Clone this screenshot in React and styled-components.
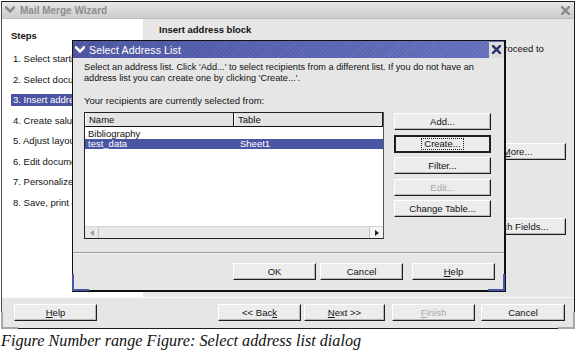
import styled, { createGlobalStyle, css } from "styled-components";

const GlobalStyle = createGlobalStyle`
  html, body {
    margin: 0;
    padding: 0;
    background: #ffffff;
  }
  body {
    font-family: "Liberation Sans", Arial, sans-serif;
  }
`;

const Screen = styled.div`
  position: relative;
  width: 577px;
  height: 353px;
  overflow: hidden;
  background: #ffffff;
`;

const dots = css`
  background-color: #e6e6e6;
  background-image: radial-gradient(#dcdcdc 0.6px, transparent 0.7px);
  background-size: 4px 4px;
`;

const Window = styled.div`
  margin: 1px 0 0 1px;
  width: 574px;
  height: 328px;
  box-sizing: border-box;
  border: 1px solid #1c1c1c;
  border-left-color: #4a4a4a;
  display: flex;
  flex-direction: column;
  position: relative;
  ${dots};
`;

const TitleBar = styled.div`
  height: 16px;
  display: flex;
  align-items: center;
  gap: 5px;
  padding: 0 4px 0 3px;
  background: linear-gradient(#e6e6e6, #cdcdcd);
  border-bottom: 1px solid #bdbdbd;
`;

const TitleText = styled.span`
  flex: 1;
  font-size: 10px;
  font-weight: 700;
  color: ${(p) => (p.$active ? "#ffffff" : "#8c8c8c")};
  ${(p) =>
    p.$active &&
    css`
      font-size: 10.6px;
      font-weight: 400;
      letter-spacing: 0.1px;
    `}
`;

const Main = styled.div`
  flex: 1;
  display: flex;
`;

const StepsPanel = styled.div`
  width: 141px;
  background: #ffffff;
  padding: 11px 0 0 9px;
  box-sizing: border-box;
  display: flex;
  flex-direction: column;
`;

const StepsTitle = styled.div`
  font-size: 9.5px;
  font-weight: 700;
  color: #111;
  margin-bottom: 12px;
`;

const StepItem = styled.div`
  font-size: 9.5px;
  color: #111;
  height: 12px;
  line-height: 12px;
  margin-bottom: 8.5px;
  padding-left: 2px;
  white-space: nowrap;
  align-self: flex-start;
  ${(p) =>
    p.$current &&
    css`
      background: #4a54a0;
      color: #ffffff;
    `}
`;

const RightPanel = styled.div`
  flex: 1;
  padding: 5px 8px 0 16px;
  display: flex;
  flex-direction: column;
`;

const PanelTitle = styled.div`
  font-size: 9.5px;
  font-weight: 700;
  color: #111;
  margin-bottom: 8px;
`;

const PanelText = styled.div`
  font-size: 9.5px;
  color: #111;
  line-height: 12px;
  white-space: nowrap;
`;

const SideButtons = styled.div`
  display: flex;
  flex-direction: column;
  align-items: flex-end;
  gap: 58px;
  margin-top: 76px;
`;

const Button = styled.div`
  width: ${(p) => p.$w || 83}px;
  height: 17px;
  box-sizing: border-box;
  display: flex;
  align-items: center;
  justify-content: center;
  font-size: 9.5px;
  color: ${(p) => (p.$disabled ? "#a8a8a8" : "#111")};
  background: #ececec;
  border-top: 1px solid #ffffff;
  border-left: 1px solid #ffffff;
  border-right: 1px solid #1e1e1e;
  border-bottom: 1px solid #1e1e1e;
  box-shadow: inset -1px -1px 0 #b8b8b8;
  ${(p) =>
    p.$focus &&
    css`
      border: 2px solid #1e1e1e;
      height: 18px;
      box-shadow: none;
    `}
  u {
    text-decoration: underline;
  }
`;

const FocusRing = styled.span`
  border: 1px dotted #222;
  padding: 0 2px;
  line-height: 10px;
`;

const BottomBar = styled.div`
  height: 31px;
  box-sizing: border-box;
  border-top: 1px solid #fafafa;
  display: flex;
  align-items: center;
  padding: 0 0 1px 12px;
`;

const BottomGroup = styled.div`
  display: flex;
  gap: ${(p) => p.$gap || 3}px;
  margin-left: ${(p) => p.$ml || 0}px;
`;

const CornerMark = styled.div`
  position: absolute;
  bottom: -1px;
  ${(p) => (p.$right ? "right: -1px;" : "left: -1px;")}
  width: 17px;
  height: 17px;
  ${(p) =>
    p.$right
      ? css`
          border-right: 2px solid ${p.$color};
          border-bottom: 2px solid ${p.$color};
        `
      : css`
          border-left: 2px solid ${p.$color};
          border-bottom: 2px solid ${p.$color};
        `}
  box-sizing: border-box;
`;

const Dialog = styled.div`
  position: absolute;
  left: 72px;
  top: 40px;
  width: 434px;
  height: 252px;
  box-sizing: border-box;
  border: 1px solid #111;
  border-right-width: 2px;
  border-bottom-width: 2px;
  display: flex;
  flex-direction: column;
  ${dots};
`;

const DialogTitleBar = styled.div`
  height: 17px;
  display: flex;
  align-items: center;
  gap: 4px;
  padding: 0 0 0 2px;
  background: repeating-linear-gradient(
      135deg,
      rgba(255, 255, 255, 0.07) 0 1px,
      transparent 1px 3px
    ),
    linear-gradient(90deg, #4a53a0, #6470bb);
`;

const CloseBox = styled.div`
  width: 15px;
  height: 16px;
  background: #dcdcdc;
  display: flex;
  align-items: center;
  justify-content: center;
`;

const DialogBody = styled.div`
  flex: 1;
  padding: 4px 0 0 11px;
  display: flex;
  flex-direction: column;
`;

const Intro = styled.div`
  font-size: 9.2px;
  line-height: 11px;
  color: #111;
`;

const Recipients = styled.div`
  font-size: 9.5px;
  color: #111;
  margin-top: 11px;
`;

const ListRow = styled.div`
  display: flex;
  gap: 10px;
  margin-top: 6px;
`;

const ListBox = styled.div`
  width: 300px;
  height: 127px;
  box-sizing: border-box;
  border: 1px solid #222;
  border-right-color: #555;
  display: flex;
  flex-direction: column;
  background: #ffffff;
`;

const HeaderRow = styled.div`
  display: flex;
  height: 13px;
  background: #e4e4e4;
  border-bottom: 1px solid #111;
`;

const HeaderCell = styled.div`
  width: ${(p) => p.$w}px;
  flex: ${(p) => (p.$grow ? 1 : "none")};
  font-size: 9.5px;
  color: #111;
  padding-left: 3px;
  line-height: 13px;
  border-right: 1px solid #111;
  border-left: 1px solid #ffffff;
`;

const Rows = styled.div`
  flex: 1;
  padding-top: 2px;
`;

const DataRow = styled.div`
  display: flex;
  height: 10px;
  line-height: 10px;
  font-size: 9.5px;
  color: ${(p) => (p.$selected ? "#ffffff" : "#111")};
  background: ${(p) => (p.$selected ? "#4a56a4" : "transparent")};
`;

const DataCell = styled.div`
  width: ${(p) => p.$w}px;
  padding-left: 3px;
`;

const HScroll = styled.div`
  height: 11px;
  display: flex;
  align-items: stretch;
  background: #e8e8e8;
  border-top: 1px solid #d4d4d4;
`;

const ScrollArrow = styled.div`
  width: 13px;
  display: flex;
  align-items: center;
  justify-content: center;
  border-right: ${(p) => (p.$left ? "1px solid #c4c4c4" : "none")};
  border-left: ${(p) => (p.$left ? "none" : "1px solid #c4c4c4")};
  background: ${(p) => (p.$left ? "#e8e8e8" : "#f4f4f4")};
`;

const ScrollTrack = styled.div`
  flex: 1;
`;

const ListButtons = styled.div`
  display: flex;
  flex-direction: column;
  gap: 4.5px;
  margin-top: 1px;
`;

const Separator = styled.div`
  height: 1px;
  background: #9a9a9a;
  border-bottom: 1px solid #f6f6f6;
  margin: 13px 0 0 -11px;
`;

const DialogButtons = styled.div`
  display: flex;
  gap: 4px;
  margin: 9px 0 0 149px;
`;

const Caption = styled.div`
  font-family: "Liberation Serif", "Times New Roman", serif;
  font-style: italic;
  font-size: 16.2px;
  color: #111;
  margin: 3px 0 0 1px;
`;

function Chevron({ color }) {
  return (
    <svg width="10" height="8" viewBox="0 0 10 8">
      <polyline
        points="1,1.5 5,5.5 9,1.5"
        fill="none"
        stroke={color}
        strokeWidth="2.6"
        strokeLinecap="square"
      />
    </svg>
  );
}

function CloseX({ color, size = 9 }) {
  return (
    <svg width={size} height={size} viewBox="0 0 10 10">
      <path
        d="M1 1 L9 9 M9 1 L1 9"
        stroke={color}
        strokeWidth="2.6"
        strokeLinecap="square"
      />
    </svg>
  );
}

function Arrow({ dir }) {
  return (
    <svg width="4" height="6" viewBox="0 0 4 6">
      <polygon
        points={dir === "left" ? "4,0 0,3 4,6" : "0,0 4,3 0,6"}
        fill={dir === "left" ? "#9a9a9a" : "#222"}
      />
    </svg>
  );
}

const steps = [
  "1.  Select starting document",
  "2.  Select document type",
  "3.  Insert address block",
  "4.  Create salutation",
  "5.  Adjust layout",
  "6.  Edit document",
  "7.  Personalize document",
  "8.  Save, print or send",
];

export default function App() {
  return (
    <Screen>
      <GlobalStyle />
      <Window>
        <TitleBar>
          <Chevron color="#8c8c8c" />
          <TitleText>Mail Merge Wizard</TitleText>
          <CloseX color="#8c8c8c" />
        </TitleBar>
        <Main>
          <StepsPanel>
            <StepsTitle>Steps</StepsTitle>
            {steps.map((s, i) => (
              <StepItem key={s} $current={i === 2}>
                {s}
              </StepItem>
            ))}
          </StepsPanel>
          <RightPanel>
            <PanelTitle>Insert address block</PanelTitle>
            <PanelText>
              Select an address list for the address block. Choose a new list
              and click 'Next' to proceed to
              <br />
              the next step.
            </PanelText>
            <SideButtons>
              <Button $w={97}>
                <span>
                  <u>M</u>ore...
                </span>
              </Button>
              <Button $w={97}>Match Fields...</Button>
            </SideButtons>
          </RightPanel>
        </Main>
        <BottomBar>
          <Button>
            <span>
              <u>H</u>elp
            </span>
          </Button>
          <BottomGroup $ml={121}>
            <Button $w={83}>
              <span>
                &lt;&lt; Bac<u>k</u>
              </span>
            </Button>
            <Button $w={81}>
              <span>
                <u>N</u>ext &gt;&gt;
              </span>
            </Button>
          </BottomGroup>
          <BottomGroup $ml={7} $gap={6}>
            <Button $w={83} $disabled>
              <span>
                <u>F</u>inish
              </span>
            </Button>
            <Button $w={84}>Cancel</Button>
          </BottomGroup>
        </BottomBar>
        <CornerMark $color="#a8a8a8" />
        <CornerMark $right $color="#a8a8a8" />
      </Window>

      <Caption>Figure Number range Figure: Select address list dialog</Caption>

      <Dialog>
        <DialogTitleBar>
          <Chevron color="#ffffff" />
          <TitleText $active>Select Address List</TitleText>
          <CloseBox>
            <CloseX color="#2a3270" />
          </CloseBox>
        </DialogTitleBar>
        <DialogBody>
          <Intro>
            Select an address list. Click 'Add...' to select recipients from a
            different list. If you do not have an
            <br />
            address list you can create one by clicking 'Create...'.
          </Intro>
          <Recipients>Your recipients are currently selected from:</Recipients>
          <ListRow>
            <ListBox>
              <HeaderRow>
                <HeaderCell $w={144}>Name</HeaderCell>
                <HeaderCell $grow>Table</HeaderCell>
              </HeaderRow>
              <Rows>
                <DataRow>
                  <DataCell $w={149}>Bibliography</DataCell>
                  <DataCell />
                </DataRow>
                <DataRow $selected>
                  <DataCell $w={149}>test_data</DataCell>
                  <DataCell>Sheet1</DataCell>
                </DataRow>
              </Rows>
              <HScroll>
                <ScrollArrow $left>
                  <Arrow dir="left" />
                </ScrollArrow>
                <ScrollTrack />
                <ScrollArrow>
                  <Arrow dir="right" />
                </ScrollArrow>
              </HScroll>
            </ListBox>
            <ListButtons>
              <Button $w={97}>Add...</Button>
              <Button $w={97} $focus>
                <FocusRing>Create...</FocusRing>
              </Button>
              <Button $w={97}>Filter...</Button>
              <Button $w={97} $disabled>
                Edit...
              </Button>
              <Button $w={97}>Change Table...</Button>
            </ListButtons>
          </ListRow>
          <Separator />
          <DialogButtons>
            <Button $w={83}>OK</Button>
            <Button $w={83}>Cancel</Button>
            <Button $w={83} style={{ marginLeft: 5 }}>
              <span>
                <u>H</u>elp
              </span>
            </Button>
          </DialogButtons>
        </DialogBody>
        <CornerMark $color="#4a55a8" />
        <CornerMark $right $color="#4a55a8" />
      </Dialog>
    </Screen>
  );
}
